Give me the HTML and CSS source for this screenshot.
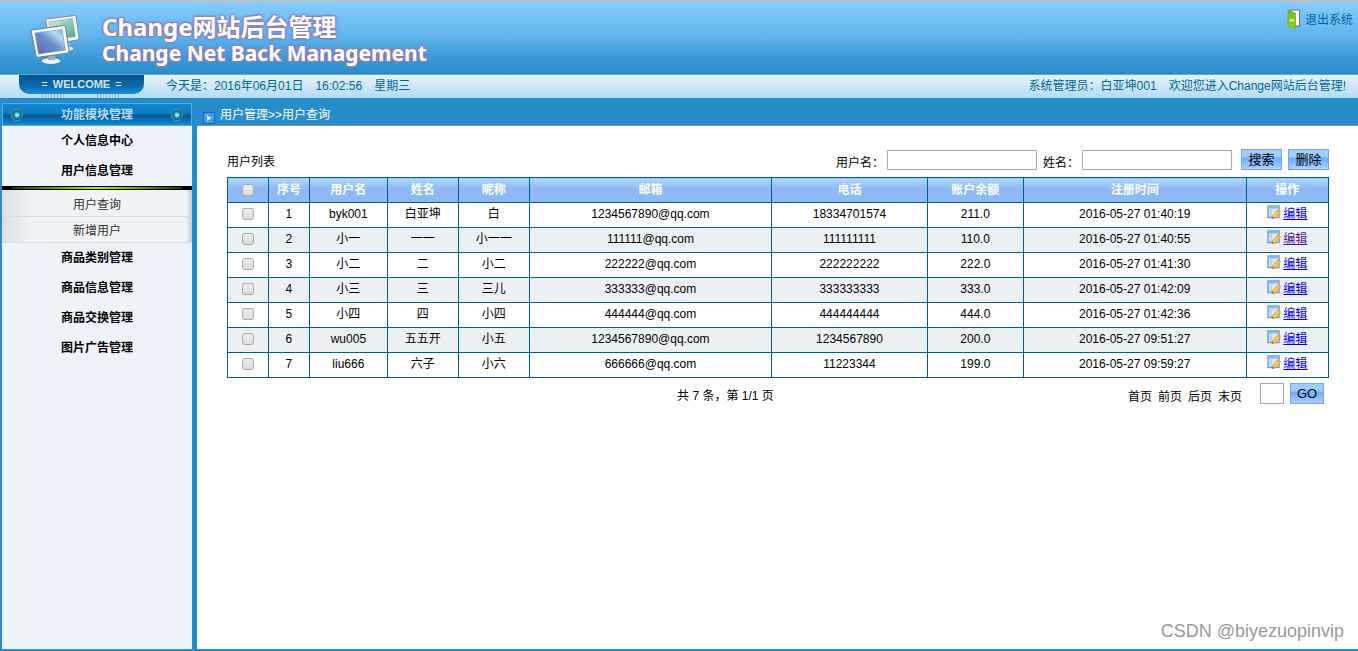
FILE: index.html
```html
<!DOCTYPE html>
<html lang="zh-CN">
<head>
<meta charset="utf-8">
<title>Change网站后台管理</title>
<link rel="stylesheet" href="styles.css">
</head>
<body>
<svg class="defs" width="0" height="0" aria-hidden="true">
  <defs>
    <linearGradient id="blueScreen" x1="0" y1="1" x2="1" y2="0"><stop offset="0" stop-color="#5a68b4"/><stop offset=".5" stop-color="#6f8fca"/><stop offset=".75" stop-color="#b5dcf0"/><stop offset="1" stop-color="#7fa9da"/></linearGradient>
    <linearGradient id="greenScreen" x1="0" y1="0" x2="1" y2="1"><stop offset="0" stop-color="#d3efe6"/><stop offset="1" stop-color="#4f9f88"/></linearGradient>
    <linearGradient id="door" x1="0" y1="0" x2="0" y2="1"><stop offset="0" stop-color="#6db83a"/><stop offset="1" stop-color="#8fd800"/></linearGradient>
    <linearGradient id="pane" x1="0" y1="0" x2="1" y2="1"><stop offset="0" stop-color="#b9d8f5"/><stop offset="1" stop-color="#f6fbff"/></linearGradient>
    <symbol id="edit" viewBox="0 0 14 15">
      <rect x="1" y="1" width="11" height="11.500" fill="url(#pane)" stroke="#6a9bcf" stroke-width="1.400"/>
      <path d="M1 1.500h11v2H1z" fill="#8db8e6"/>
      <path d="M4 5v7" stroke="#9cc0e6"/>
      <path d="M5.500 10.500 10.500 5l2.800 2.300-5 5.500-3.300.9z" fill="#f8c850" stroke="#c58a30" stroke-width=".6"/>
      <path d="m10.500 5 1-1 2.300 2.200-.8 1z" fill="#e59a67"/><path d="m5.500 11.500 1.500 1.500-2 .7z" fill="#77604a"/>
    </symbol>
  </defs>
</svg>
<header class="banner">
  <div class="brand">
    <svg class="logo" viewBox="0 0 50 52" aria-hidden="true">
      <ellipse cx="37" cy="34.500" rx="7" ry="3" fill="#e2e8ed" stroke="#5f7f97"/>
      <path d="M34 29h6v5h-6z" fill="#aab9c5"/>
      <path d="m15.500 5 29-3.500q1.500 0 1.700 1.500L49 24q0 1.500-1.500 1.800L20 31z" fill="#f3f7f8" stroke="#718fa4"/>
      <path d="m19 8 23.500-3.500 3 18-24 4z" fill="url(#greenScreen)" stroke="#8aa7a5" stroke-width=".6"/>
      <ellipse cx="21" cy="47" rx="10" ry="3.500" fill="#edf0f2" stroke="#5c7790"/>
      <path d="M18 40h7v6h-7z" fill="#9dacba"/>
      <path d="m2.500 16 31-4.500q1.700 0 2 1.500L39 37q0 2-2 2.300l-29 4q-1.700 0-2-1.500L1.300 18q-.2-1.700 1.200-2z" fill="#f7f9fb" stroke="#63809b"/>
      <path d="m5 19 27-3.500L35.500 36l-27 4z" fill="url(#blueScreen)" stroke="#7895ba" stroke-width=".6"/>
    </svg>
    <h1 class="title"><span class="title-zh">Change网站后台管理</span><span class="title-en">Change Net Back Management</span></h1>
  </div>
  <a class="logout" href="#logout">
    <svg class="door" viewBox="0 0 14 21" aria-hidden="true"><path d="M3 1h9.500v16H3z" fill="#fff" stroke="#6b6d63"/><path d="M1 1 8.500 4v16L1 17z" fill="url(#door)" stroke="#629b2c" stroke-width=".6"/><path d="M2.500 10.500h4.500v1.800H2.500z" fill="#eef5dc"/></svg>
    <span>退出系统</span>
  </a>
</header>
<div class="status">
  <div class="welcome"><span>=</span><b>WELCOME</b><span>=</span></div>
  <div class="today"><span>今天是：2016年06月01日</span><span>16:02:56</span><span>星期三</span></div>
  <div class="greeting"><span>系统管理员：白亚坤001</span><span>欢迎您进入Change网站后台管理!</span></div>
</div>
<div class="workspace">
  <nav class="sidebar" aria-label="功能模块管理">
    <div class="side-title"><i class="knob"></i><h2>功能模块管理</h2><i class="knob"></i></div>
    <a class="module" href="#profile">个人信息中心</a>
    <a class="module" href="#users">用户信息管理</a>
    <div class="submenu">
      <a href="#query">用户查询</a>
      <a href="#add">新增用户</a>
    </div>
    <a class="module" href="#categories">商品类别管理</a>
    <a class="module" href="#goods">商品信息管理</a>
    <a class="module" href="#exchange">商品交换管理</a>
    <a class="module" href="#ads">图片广告管理</a>
  </nav>
  <main class="main">
    <div class="crumbs"><svg class="arrow" viewBox="0 0 12 12" aria-hidden="true"><rect x=".5" y=".5" width="11" height="11" fill="#3ba0ec" stroke="#1464cc"/><path d="m4 3 4.500 3L4 9z" fill="#fff"/></svg><span>用户管理&gt;&gt;用户查询</span></div>
    <div class="content">
      <form class="toolbar">
        <span class="list-title">用户列表</span>
        <label for="username">用户名：</label><input class="field" id="username" type="text">
        <label for="realname">姓名：</label><input class="field" id="realname" type="text">
        <button class="btn search" type="button">搜索</button>
        <button class="btn" type="button">删除</button>
      </form>
      <table class="users">
        <colgroup><col class="c-check"><col class="c-check"><col class="c-user"><col class="c-name"><col class="c-name"><col class="c-mail"><col class="c-phone"><col class="c-money"><col class="c-time"><col class="c-action"></colgroup>
        <thead><tr><th><input type="checkbox" aria-label="全选"></th><th>序号</th><th>用户名</th><th>姓名</th><th>昵称</th><th>邮箱</th><th>电话</th><th>账户余额</th><th>注册时间</th><th>操作</th></tr></thead>
        <tbody>
          <tr><td><input type="checkbox" aria-label="选择 1"></td><td>1</td><td>byk001</td><td>白亚坤</td><td>白</td><td>1234567890@qq.com</td><td>18334701574</td><td>211.0</td><td>2016-05-27 01:40:19</td><td><span class="action"><svg class="edit"><use href="#edit"/></svg><a href="#edit-1">编辑</a></span></td></tr>
          <tr><td><input type="checkbox" aria-label="选择 2"></td><td>2</td><td>小一</td><td>一一</td><td>小一一</td><td>111111@qq.com</td><td>111111111</td><td>110.0</td><td>2016-05-27 01:40:55</td><td><span class="action"><svg class="edit"><use href="#edit"/></svg><a class="seen" href="#edit-2">编辑</a></span></td></tr>
          <tr><td><input type="checkbox" aria-label="选择 3"></td><td>3</td><td>小二</td><td>二</td><td>小二</td><td>222222@qq.com</td><td>222222222</td><td>222.0</td><td>2016-05-27 01:41:30</td><td><span class="action"><svg class="edit"><use href="#edit"/></svg><a href="#edit-3">编辑</a></span></td></tr>
          <tr><td><input type="checkbox" aria-label="选择 4"></td><td>4</td><td>小三</td><td>三</td><td>三儿</td><td>333333@qq.com</td><td>333333333</td><td>333.0</td><td>2016-05-27 01:42:09</td><td><span class="action"><svg class="edit"><use href="#edit"/></svg><a href="#edit-4">编辑</a></span></td></tr>
          <tr><td><input type="checkbox" aria-label="选择 5"></td><td>5</td><td>小四</td><td>四</td><td>小四</td><td>444444@qq.com</td><td>444444444</td><td>444.0</td><td>2016-05-27 01:42:36</td><td><span class="action"><svg class="edit"><use href="#edit"/></svg><a href="#edit-5">编辑</a></span></td></tr>
          <tr><td><input type="checkbox" aria-label="选择 6"></td><td>6</td><td>wu005</td><td>五五开</td><td>小五</td><td>1234567890@qq.com</td><td>1234567890</td><td>200.0</td><td>2016-05-27 09:51:27</td><td><span class="action"><svg class="edit"><use href="#edit"/></svg><a href="#edit-6">编辑</a></span></td></tr>
          <tr><td><input type="checkbox" aria-label="选择 7"></td><td>7</td><td>liu666</td><td>六子</td><td>小六</td><td>666666@qq.com</td><td>11223344</td><td>199.0</td><td>2016-05-27 09:59:27</td><td><span class="action"><svg class="edit"><use href="#edit"/></svg><a href="#edit-7">编辑</a></span></td></tr>
        </tbody>
      </table>
      <div class="pager">
        <span class="count">共 7 条，第 1/1 页</span>
        <div class="pages"><a href="#first">首页</a><a href="#prev">前页</a><a href="#next">后页</a><a href="#last">末页</a></div>
        <input class="field page-no" type="text" aria-label="页码"><button class="btn go" type="button">GO</button>
      </div>
    </div>
    <div class="credit">CSDN @biyezuopinvip</div>
  </main>
</div>
</body>
</html>
```
FILE: styles.css
```css
* { box-sizing: border-box; }

body {
  margin: 0;
  min-height: 100vh;
  display: flex;
  flex-direction: column;
  background: #278cca;
  color: #000;
  font: 12px/18px "Liberation Sans", "Noto Sans CJK SC", sans-serif;
}

.defs { position: absolute; }

.banner {
  display: flex;
  justify-content: space-between;
  align-items: flex-start;
  height: 75px;
  border-top: 2px solid #b5bfc6;
  border-bottom: 1px solid #6aa5cf;
  background: linear-gradient(#85ccff, #62b6ed 45%, #3b9cd9 75%, #278cca);
}

.brand { display: flex; gap: 22px; padding: 12px 0 0 30px; }
.logo { width: 50px; height: 52px; }

.title {
  display: flex;
  flex-direction: column;
  margin: 0;
  color: #fff;
  font-family: "Noto Sans", "Noto Sans CJK SC", sans-serif;
  font-weight: 700;
  line-height: 26px;
  white-space: nowrap;
  text-shadow: 0 0 2px #8a80bd, 1px 1px 2px #8a80bd, -1px -1px 2px #8a80bd, 1px -1px 2px #8a80bd, -1px 1px 2px #8a80bd;
}
.title-zh { font-size: 24px; }
.title-en { font-size: 21px; }

.logout {
  display: flex;
  gap: 4px;
  padding: 7px 5px 0 0;
  color: #069;
  text-decoration: none;
  line-height: 22px;
}
.door { width: 14px; height: 21px; }

.status {
  display: flex;
  height: 23px;
  padding: 0 12px 0 19px;
  background: linear-gradient(#e6f4fd, #b4daf3);
  color: #069;
  line-height: 23px;
  white-space: nowrap;
}

.welcome {
  position: relative;
  display: flex;
  justify-content: center;
  gap: 5px;
  width: 125px;
  height: 19px;
  margin-right: 22px;
  border-radius: 0 0 10px 10px;
  background: linear-gradient(#07548d, #0b6bad 60%, #1c8ce0);
  color: #cfe6f6;
  font-size: 11px;
  line-height: 19px;
}
.welcome::before,
.welcome::after {
  content: "";
  position: absolute;
  top: 19px;
  width: 23px;
  height: 4px;
  background: repeating-linear-gradient(90deg, #95b6cc 0 1px, transparent 1px 3px);
}
.welcome::before { left: 23px; }
.welcome::after { right: 24px; }

.today { display: flex; gap: 12px; }
.greeting { display: flex; gap: 12px; margin-left: auto; }

.workspace {
  flex: 1;
  display: flex;
  gap: 5px;
  padding: 0 0 2px 2px;
}

.sidebar {
  flex: 0 0 190px;
  margin-top: 5px;
  background: #edf2fb;
  text-align: center;
}

.side-title {
  display: flex;
  align-items: center;
  justify-content: space-between;
  height: 23px;
  padding: 0 8px;
  border: 1px solid #4eafea;
  background: linear-gradient(#1188d0, #0c78bd 48%, #06558c 52%, #1188d4);
}
.side-title h2 { margin: 0; color: #b9dcf7; font-size: 12px; }
.knob {
  width: 12px;
  height: 12px;
  border: 1px solid #629bb7;
  border-radius: 50%;
  background: radial-gradient(circle, #7df0ff 0 15%, #2a93b4 40%, #0b4968 70%);
}

.module {
  display: block;
  color: #000;
  font-size: 12px;
  font-weight: 700;
  line-height: 30px;
  text-decoration: none;
}

.submenu {
  border-top: 4px solid #000;
  background: linear-gradient(90deg, #dce0e5, #eff3f6 15%, #eff3f6 97%, #c5c9d0);
}
.submenu::before {
  content: "";
  display: block;
  height: 2px;
  margin: -3px 10px 1px;
  background: linear-gradient(90deg, #263300, #7fa800 28%, #b7f000 50%, #7fa800 72%, #263300);
}
.submenu a {
  display: block;
  height: 26px;
  border-bottom: 1px solid #d8dde2;
  color: #333;
  line-height: 28px;
  text-decoration: none;
}
.submenu a:first-of-type { height: 27px; line-height: 30px; }

.main {
  position: relative;
  flex: 1;
  min-width: 0;
  background: #fff;
}

.crumbs {
  display: flex;
  gap: 5px;
  height: 28px;
  padding: 5px 6px;
  border-bottom: 1px solid #8b9298;
  background: #278cca;
  color: #fff;
  line-height: 24px;
}
.arrow { width: 12px; height: 12px; margin-top: 9px; }

.content { padding: 23px 29px 0 30px; }

.toolbar {
  display: flex;
  align-items: flex-start;
  height: 28px;
}
.toolbar label { padding: 5px 3px 0 6px; }
.list-title { margin-right: auto; padding-top: 4px; }

.field {
  width: 150px;
  height: 20px;
  margin-top: 1px;
  border: 1px solid #a9a9a9;
  background: #fff;
}

.btn {
  width: 41px;
  height: 21px;
  margin-left: 6px;
  padding: 0;
  border: 1px solid #7ba5e4;
  background: linear-gradient(#a4cdff 0 35%, #70adff 45%, #abd0ff);
  color: #000;
  font: 13px/18px "Liberation Sans", "Noto Sans CJK SC", sans-serif;
}
.search { margin-left: 9px; }

.users {
  width: 100%;
  table-layout: fixed;
  border-collapse: collapse;
  text-align: center;
}
.c-check { width: 3.72%; }
.c-user { width: 7.08%; }
.c-name { width: 6.45%; }
.c-mail { width: 22%; }
.c-phone { width: 14.15%; }
.c-money { width: 8.71%; }
.c-time { width: 20.25%; }
.c-action { width: 7.47%; }
.users th,
.users td {
  height: 25px;
  padding: 0 0 2px;
  border: 1px solid #006080;
  line-height: 18px;
}
.users th {
  padding-bottom: 0;
  background: linear-gradient(#b0d6fc, #8db9f4 45%);
  color: #fff;
}
.users tbody tr:nth-child(even) { background: #ecf0f5; }
.users input {
  appearance: none;
  display: block;
  width: 12px;
  height: 12px;
  margin: 0 auto;
  border: 1px solid #aaa;
  border-radius: 3px;
  background: linear-gradient(#ededed, #dcdcdc);
}

.action { display: flex; justify-content: center; gap: 2px; }
.action a { color: #00e; }
.action .seen { color: #551a8b; }
.edit { width: 14px; height: 15px; }

.pager {
  display: grid;
  grid-template-columns: 1fr auto 24px 40px;
  padding: 5px 5px 0 0;
}
.count { padding: 4px 0 0 96px; text-align: center; }
.pages { display: flex; gap: 6px; padding: 5px 18px 0 0; }
.pages a { color: #000; text-decoration: none; }
.page-no { width: 24px; height: 21px; margin-top: 0; }
.go { width: 34px; }

.credit {
  position: absolute;
  right: 14px;
  bottom: 7px;
  color: #999;
  font: 18px/22px "Liberation Sans", sans-serif;
}
```
